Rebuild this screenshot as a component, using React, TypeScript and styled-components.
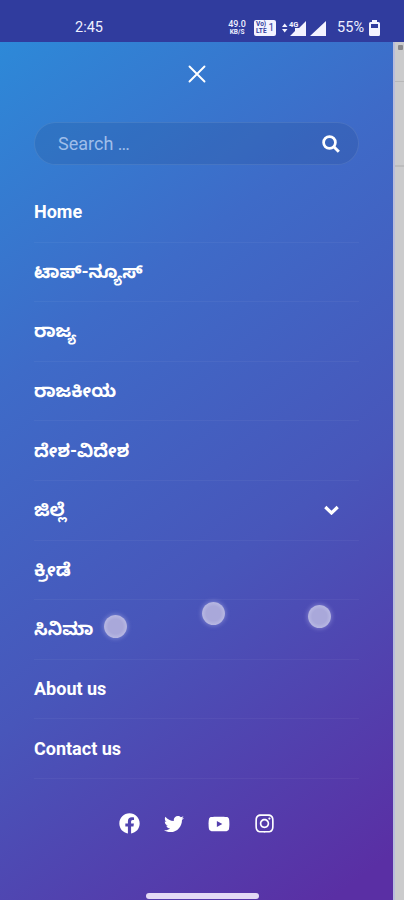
import React from "react";
import styled, { createGlobalStyle } from "styled-components";
import { FaFacebook, FaTwitter, FaYoutube, FaInstagram } from "react-icons/fa";

const GlobalStyle = createGlobalStyle`
  * { box-sizing: border-box; }
  body { margin: 0; background: #c9c9ca; }
  button { border: 0; padding: 0; background: none; color: inherit; }
  svg { display: block; }
`;

const Screen = styled.div`
  position: relative;
  display: flex;
  flex-direction: column;
  width: 404px;
  height: 900px;
  overflow: hidden;
  font-family: Roboto, "Noto Sans Kannada", "Noto Sans", sans-serif;
  color: #fff;
`;

const StatusBar = styled.header`
  display: flex;
  align-items: center;
  height: 42px;
  flex: none;
  padding: 13px 24px 0 75px;
  background: #303c9e;
  color: #eef0ff;
`;

const Clock = styled.time`
  flex: 1;
  font-size: 14.5px;
  line-height: 20px;
`;

const Speed = styled.div`
  display: flex;
  flex-direction: column;
  align-items: center;
  width: 20px;
  margin-right: 7px;
  font-weight: 500;
  white-space: nowrap;
`;

const SpeedValue = styled.span`
  font-size: 9px;
  line-height: 9px;
`;

const SpeedUnit = styled.span`
  font-size: 6.5px;
  font-weight: 700;
  line-height: 7px;
`;

const Volte = styled.div`
  display: flex;
  align-items: center;
  gap: 2px;
  width: 22px;
  height: 16px;
  padding-left: 2px;
  margin-right: 6px;
  border-radius: 2px;
  background: #f3f3ff;
  color: #303c9e;
  font-size: 10px;
`;

const VolteLabel = styled.span`
  font-size: 6.5px;
  font-weight: 700;
  line-height: 7px;
`;

const Battery = styled.span`
  margin: 0 5px 0 9px;
  font-size: 14.5px;
  line-height: 20px;
`;

const Body = styled.div`
  display: flex;
  flex: 1;
`;

const Drawer = styled.aside`
  display: flex;
  flex-direction: column;
  width: 393px;
  padding: 0 34px;
  background: linear-gradient(143deg, #2d89d8 0%, #3e6bc8 30%, #4856ba 60%, #5a2fa4 96%);
`;

const Page = styled.div`
  width: 11px;
  background: #cbcbcc;
  border-left: 2px solid #b9bddb;
`;

const PageHead = styled.div`
  height: 40px;
  padding: 3px 0 0 3px;
  border-bottom: 1px solid #b8b8b9;
`;

const PageMark = styled.div`
  width: 5px;
  height: 5px;
  border-radius: 1px;
  background: #87878b;
`;

const PageSection = styled.div`
  height: 85px;
  border-bottom: 2px solid #bcbcbd;
`;

const Close = styled.button`
  align-self: center;
  height: 18px;
  margin-top: 23px;
`;

const Search = styled.form`
  display: flex;
  align-items: center;
  justify-content: space-between;
  height: 43px;
  flex: none;
  margin-top: 39px;
  padding: 0 18px 0 23px;
  border: 1px solid rgba(255, 255, 255, 0.09);
  border-radius: 22px;
  background: rgba(30, 65, 125, 0.17);
`;

const Hint = styled.span`
  color: #9fbeea;
  font-size: 18px;
  line-height: 22px;
`;

const Dots = styled.span`
  letter-spacing: -1px;
`;

const Menu = styled.ul`
  margin: 18px 0 0;
  padding: 0;
  list-style: none;
`;

const Item = styled.li`
  display: flex;
  align-items: center;
  justify-content: space-between;
  height: 59.6px;
  padding-right: 20px;
  border-bottom: 1px solid rgba(255, 255, 255, 0.045);
  font-size: 18px;
  font-weight: 700;
  line-height: 24px;
`;

const Label = styled.a`
  white-space: nowrap;
`;

const Socials = styled.nav`
  display: flex;
  align-items: center;
  justify-content: center;
  gap: 24px;
  margin: 34px 0 0 1px;
`;

const Touch = styled.i<{ $x: number; $y: number }>`
  position: absolute;
  left: ${(p) => p.$x - 11.5}px;
  top: ${(p) => p.$y - 11.5}px;
  width: 23px;
  height: 23px;
  border-radius: 50%;
  background: radial-gradient(#a9a8da 45%, #b5b5e1 65%);
  box-shadow: 0 0 4px 1px rgba(190, 190, 240, 0.4);
`;

const HomeBar = styled.div`
  position: absolute;
  left: 146px;
  top: 893px;
  width: 113px;
  height: 6px;
  border-radius: 3px;
  background: #e4daf5;
`;

const items: { text: string; expandable?: boolean }[] = [
  { text: "Home" },
  { text: "ಟಾಪ್-ನ್ಯೂಸ್" },
  { text: "ರಾಜ್ಯ" },
  { text: "ರಾಜಕೀಯ" },
  { text: "ದೇಶ-ವಿದೇಶ" },
  { text: "ಜಿಲ್ಲೆ", expandable: true },
  { text: "ಕ್ರೀಡೆ" },
  { text: "ಸಿನಿಮಾ" },
  { text: "About us" },
  { text: "Contact us" },
];

export default function App() {
  return (
    <Screen>
      <GlobalStyle />
      <StatusBar>
        <Clock>2:45</Clock>
        <Speed>
          <SpeedValue>49.0</SpeedValue>
          <SpeedUnit>KB/S</SpeedUnit>
        </Speed>
        <Volte><VolteLabel>Vo)<br />LTE</VolteLabel>1</Volte>
        <svg width="46" height="18" viewBox="0 0 46 18" fill="#f3f3ff">
          <path d="M0 8 2.700 4.500 5.500 8ZM0 10h5.500L2.700 13.500ZM24 2v15H8l5-5V9h4ZM44 2v15H28Z" />
          <text x="7" y="7.500" fontSize="7.500" fontWeight="700">4G</text>
        </svg>
        <Battery>55%</Battery>
        <svg width="11" height="16" viewBox="0 0 11 16">
          <path fill="#f3f3ff" fillRule="evenodd" d="M3 0h5v2h1.500Q11 2 11 3.500v11Q11 16 9.500 16h-8Q0 16 0 14.500v-11Q0 2 1.500 2H3ZM2 4v4h7V4Z" />
        </svg>
      </StatusBar>
      <Body>
        <Drawer>
          <Close aria-label="Close">
            <svg width="18" height="18" viewBox="0 0 18 18" stroke="#fff" strokeWidth="1.900" strokeLinecap="round">
              <path d="m1.500 1.500 15 15m0-15-15 15" />
            </svg>
          </Close>
          <Search>
            <Hint>Search <Dots>...</Dots></Hint>
            <svg width="18" height="18" viewBox="0 0 18 18" fill="none" stroke="#fff" strokeWidth="2.700">
              <circle cx="7.500" cy="7.500" r="5.900" />
              <path d="m11.800 11.800 5 5" strokeWidth="3" />
            </svg>
          </Search>
          <Menu>
            {items.map((item) => (
              <Item key={item.text}>
                <Label>{item.text}</Label>
                {item.expandable && (
                  <svg width="15" height="10" viewBox="0 0 15 10" fill="none" stroke="#fff" strokeWidth="3.200">
                    <path d="m1.300 2 6.200 6 6.200-6" />
                  </svg>
                )}
              </Item>
            ))}
          </Menu>
          <Socials>
            <FaFacebook size={21} />
            <FaTwitter size={20} />
            <FaYoutube size={22} />
            <FaInstagram size={21} />
          </Socials>
        </Drawer>
        <Page>
          <PageHead><PageMark /></PageHead>
          <PageSection />
        </Page>
      </Body>
      <Touch $x={115.5} $y={626.5} />
      <Touch $x={213} $y={613} />
      <Touch $x={319} $y={616} />
      <HomeBar />
    </Screen>
  );
}
